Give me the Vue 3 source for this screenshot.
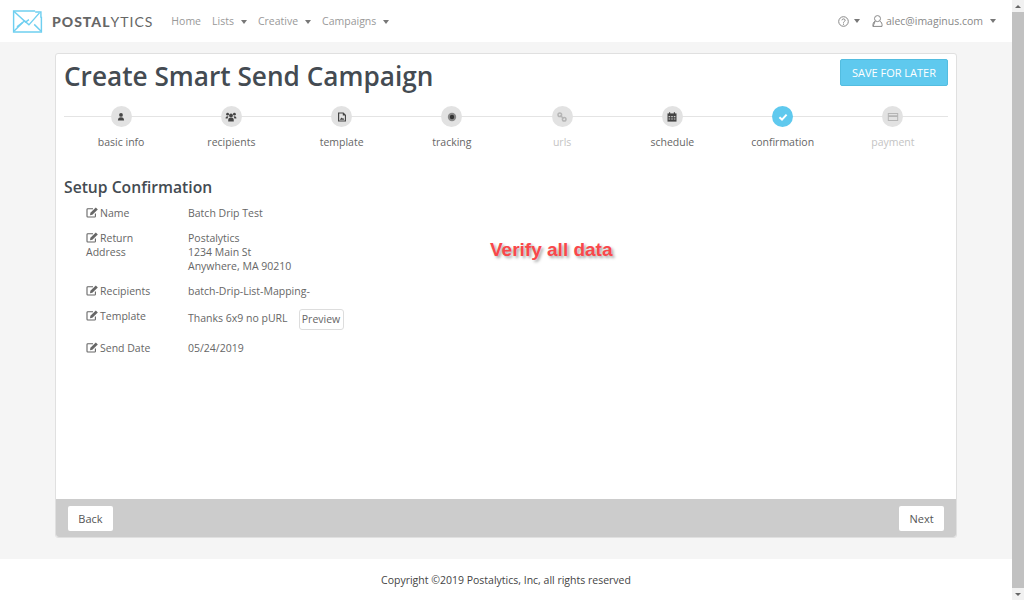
<script setup>
const navLinks = [
  { label: "Home", caret: false },
  { label: "Lists", caret: true },
  { label: "Creative", caret: true },
  { label: "Campaigns", caret: true },
];

const steps = [
  { label: "basic info", icon: "user" },
  { label: "recipients", icon: "users" },
  { label: "template", icon: "image" },
  { label: "tracking", icon: "target" },
  { label: "urls", icon: "link", muted: true },
  { label: "schedule", icon: "calendar" },
  { label: "confirmation", icon: "check", active: true },
  { label: "payment", icon: "card", muted: true },
];
</script>

<template>
  <div class="page">
    <div class="content">
      <header class="navbar">
        <svg class="logo" width="31" height="23" viewBox="0 0 32 24" fill="none" stroke="#6fcff0" stroke-width="1.5">
          <path d="M24 1H1.5V23H30.5V7" />
          <path d="M2 1.5L14 12.5L17.5 10" />
          <path d="M2 22L11 13M30 22L23 15" />
          <path d="M5 17.5L13 11.5L17.5 15.5L28.5 3" />
          <path d="M24 2H30V8" />
        </svg>
        <span class="brand"><b>POSTAL</b>YTICS</span>
        <nav class="nav-links">
          <a v-for="link in navLinks" :key="link.label" class="nav-link">
            {{ link.label }}<i v-if="link.caret" class="caret"></i>
          </a>
        </nav>
        <div class="nav-right">
          <svg width="11" height="11" viewBox="0 0 11 11" fill="none" stroke="#888" stroke-width="1">
            <circle cx="5.5" cy="5.5" r="4.8" />
            <path d="M3.9 4.3C3.9 2.4 7.2 2.5 7.2 4.3C7.2 5.4 5.5 5.4 5.5 6.7" />
            <path d="M5.5 7.6V8.8" />
          </svg>
          <i class="caret help-caret"></i>
          <svg class="user-icon" width="11" height="12" viewBox="0 0 11 12" fill="none" stroke="#888" stroke-width="1">
            <circle cx="5.5" cy="3.6" r="3" />
            <path d="M1 11.4H10C10.4 8.6 9.4 6.8 7.8 6.2M3.2 6.2C1.6 6.8 .6 8.6 1 11.4Z" />
          </svg>
          <span class="email">alec@imaginus.com</span>
          <i class="caret"></i>
        </div>
      </header>

      <main class="main">
        <section class="card">
          <div class="card-body">
            <div class="title-row">
              <h1>Create Smart Send Campaign</h1>
              <button class="save-btn">SAVE FOR LATER</button>
            </div>

            <ol class="steps">
              <li
                v-for="step in steps"
                :key="step.label"
                class="step"
                :class="{ muted: step.muted, active: step.active }"
              >
                <span class="dot">
                  <svg width="12" height="12" viewBox="0 0 12 12" class="step-icon">
                    <template v-if="step.icon === 'user'">
                      <circle cx="6" cy="3.9" r="1.9" />
                      <path d="M2.9 9.6C2.9 7.3 4 6.2 6 6.2S9.1 7.3 9.1 9.6Z" />
                    </template>
                    <template v-else-if="step.icon === 'users'">
                      <circle cx="6" cy="4.4" r="1.9" />
                      <circle cx="2.6" cy="3.2" r="1.4" />
                      <circle cx="9.4" cy="3.2" r="1.4" />
                      <path d="M3.2 10.4C3 7.6 4 6.6 6 6.6S9 7.6 8.8 10.4Z" />
                      <path d="M.6 7.6C.6 5.6 1.4 5 3.4 5.2L2.6 7.6ZM11.4 7.6C11.4 5.6 10.6 5 8.6 5.2L9.4 7.6Z" />
                    </template>
                    <template v-else-if="step.icon === 'image'">
                      <path d="M2 1.5H7.5L10 4V10.5H2Z" fill="#444" />
                      <path d="M3.2 2.6H6.8V4.6H8.9V9.4H3.2Z" fill="#e2e2e2" />
                      <path d="M3.8 8.8L5.4 6.6L6.4 7.6L7.2 7L8.3 8.8Z" fill="#444" />
                    </template>
                    <template v-else-if="step.icon === 'target'">
                      <circle cx="6" cy="6" r="4.2" fill="#888" />
                      <circle cx="6" cy="6" r="2.2" fill="#333" />
                    </template>
                    <template v-else-if="step.icon === 'link'">
                      <g fill="none" stroke="#b5b5b5" stroke-width="1.5">
                        <circle cx="3.8" cy="3.8" r="1.8" />
                        <circle cx="8.2" cy="8.2" r="1.8" />
                        <path d="M4.5 4.5L7.5 7.5" />
                      </g>
                    </template>
                    <template v-else-if="step.icon === 'calendar'">
                      <path d="M1.5 2.4H10.5V10.6H1.5Z" fill="#444" />
                      <path d="M3 1.2H4.2V3H3ZM7.8 1.2H9V3H7.8Z" fill="#444" />
                      <path d="M2.6 5H4.2V6.2H2.6ZM5.2 5H6.8V6.2H5.2ZM7.8 5H9.4V6.2H7.8ZM2.6 7.4H4.2V8.6H2.6ZM5.2 7.4H6.8V8.6H5.2ZM7.8 7.4H9.4V8.6H7.8Z" fill="#ccc" />
                    </template>
                    <template v-else-if="step.icon === 'check'">
                      <path d="M2.4 6.2L5 8.6L9.6 3.6" fill="none" stroke="#fff" stroke-width="2" />
                    </template>
                    <template v-else>
                      <path d="M.8 2H11.2V10H.8Z" fill="#b5b5b5" />
                      <path d="M1.8 3H10.2V4.2H1.8ZM1.8 6H10.2V9H1.8Z" fill="#e2e2e2" />
                    </template>
                  </svg>
                </span>
                <span class="step-label">{{ step.label }}</span>
              </li>
            </ol>

            <h2>Setup Confirmation</h2>

            <div class="details">
              <div class="row">
                <div class="key"><svg class="edit" width="13" height="11" viewBox="0 0 13 11"><use href="#edit-icon" /></svg>Name</div>
                <div class="val">Batch Drip Test</div>
              </div>
              <div class="row">
                <div class="key"><svg class="edit" width="13" height="11" viewBox="0 0 13 11"><use href="#edit-icon" /></svg>Return<br />Address</div>
                <div class="val">Postalytics<br />1234 Main St<br />Anywhere, MA 90210</div>
              </div>
              <div class="row">
                <div class="key"><svg class="edit" width="13" height="11" viewBox="0 0 13 11"><use href="#edit-icon" /></svg>Recipients</div>
                <div class="val">batch-Drip-List-Mapping-</div>
              </div>
              <div class="row row-template">
                <div class="key"><svg class="edit" width="13" height="11" viewBox="0 0 13 11"><use href="#edit-icon" /></svg>Template</div>
                <div class="val val-template">Thanks 6x9 no pURL<button class="preview">Preview</button></div>
              </div>
              <div class="row">
                <div class="key"><svg class="edit" width="13" height="11" viewBox="0 0 13 11"><use href="#edit-icon" /></svg>Send Date</div>
                <div class="val">05/24/2019</div>
              </div>
            </div>

            <p class="callout">Verify all data</p>
          </div>

          <div class="card-footer">
            <button class="pager-btn">Back</button>
            <button class="pager-btn">Next</button>
          </div>
        </section>
      </main>

      <footer class="site-footer">Copyright ©2019 Postalytics, Inc, all rights reserved</footer>
    </div>

    <div class="scrollbar">
      <span class="arrow up"></span>
      <span class="thumb"></span>
      <span class="arrow down"></span>
    </div>

    <svg width="0" height="0" class="defs">
      <symbol id="edit-icon" viewBox="0 0 13 11">
        <path d="M9.4 6.4V9.2C9.4 9.7 9 10 8.6 10H1.8C1.3 10 1 9.7 1 9.2V2.6C1 2.1 1.3 1.8 1.8 1.8H7" fill="none" stroke="#666" stroke-width="1.1" />
        <path d="M4.4 5.8L9.8 .6L11.8 2.4L6.4 7.8L4 8.2Z" fill="#666" />
      </symbol>
    </svg>
  </div>
</template>

<style scoped>
.page {
  display: flex;
  width: 1024px;
  height: 600px;
  overflow: hidden;
  font-family: "Open Sans", sans-serif;
  font-size: 10.5px;
  color: #555;
}

.content {
  flex: 1;
  display: flex;
  flex-direction: column;
  min-width: 0;
}

.defs {
  position: absolute;
}

/* navbar */
.navbar {
  height: 42px;
  display: flex;
  align-items: center;
  padding-left: 12px;
  padding-right: 16px;
  background: #fff;
  flex-shrink: 0;
}

.logo {
  margin-right: 9px;
}

.brand {
  font-family: "Lato", sans-serif;
  font-size: 14px;
  letter-spacing: 1px;
  color: #666;
  margin-right: 18px;
}

.brand b {
  font-weight: 900;
}

.nav-links {
  display: flex;
  gap: 11px;
}

.nav-link {
  color: #999;
  white-space: nowrap;
}

.caret {
  display: inline-block;
  width: 0;
  height: 0;
  margin-left: 7px;
  vertical-align: 1px;
  border-top: 4px solid #777;
  border-left: 3.5px solid transparent;
  border-right: 3.5px solid transparent;
}

.nav-right {
  margin-left: auto;
  display: flex;
  align-items: center;
  color: #888;
}

.help-caret {
  margin-right: 12px;
  margin-left: 5px;
  vertical-align: 0;
}

.user-icon {
  margin-right: 3px;
}

/* main */
.main {
  flex: 1;
  background: #f5f5f5;
  padding: 11px 55px 21px;
  display: flex;
  min-height: 0;
}

.card {
  flex: 1;
  display: flex;
  flex-direction: column;
  background: #fff;
  border: 1px solid #e0e0e0;
  border-radius: 3px;
  min-width: 0;
}

.card-body {
  position: relative;
  flex: 1;
  padding: 4px 8px 0;
}

.title-row {
  display: flex;
  justify-content: space-between;
  align-items: flex-start;
  height: 44px;
}

h1 {
  margin: 0;
  font-size: 26.2px;
  line-height: 36px;
  font-weight: 600;
  color: #444b52;
}

.save-btn {
  margin-top: 1px;
  width: 108px;
  height: 27px;
  padding: 0;
  font-family: inherit;
  font-size: 11px;
  color: #fff;
  background: #5fc9ee;
  border: 1px solid #53bde0;
  border-radius: 2px;
}

/* stepper */
.steps {
  position: relative;
  display: grid;
  grid-template-columns: repeat(8, 1fr);
  list-style: none;
  margin: 0;
  padding: 4px 0 0 2px;
}

.steps::before {
  content: "";
  position: absolute;
  left: 0;
  right: 0;
  top: 14px;
  height: 1px;
  background: #e4e4e4;
}

.step {
  position: relative;
  display: flex;
  flex-direction: column;
  align-items: center;
}

.dot {
  width: 21px;
  height: 21px;
  border-radius: 50%;
  background: #e2e2e2;
  display: flex;
  align-items: center;
  justify-content: center;
}

.step-icon {
  fill: #444;
}

.step-label {
  margin-top: 7px;
  line-height: 16px;
  white-space: nowrap;
  color: #666;
}

.step.muted .step-label {
  color: #c4c4c4;
}

.step.active .dot {
  background: #5fc9ee;
}

/* details */
h2 {
  margin: 27px 0 0;
  font-size: 15.7px;
  line-height: 21px;
  font-weight: 600;
  color: #444b52;
}

.details {
  margin-top: 8px;
  padding-left: 22px;
}

.row {
  display: grid;
  grid-template-columns: 102px 1fr;
  line-height: 14px;
  margin-bottom: 11px;
}

.key,
.val {
  color: #666;
}

.edit {
  margin-right: 1px;
  vertical-align: -1px;
}

.val-template {
  display: flex;
  align-items: center;
  height: 24px;
  margin-top: -3px;
}

.preview {
  margin-left: 11px;
  margin-top: 2px;
  width: 45px;
  height: 21px;
  padding: 0;
  font-family: inherit;
  font-size: 10.5px;
  color: #666;
  background: #fff;
  border: 1px solid #ddd;
  border-radius: 3px;
}

.callout {
  position: absolute;
  left: 434px;
  top: 186px;
  margin: 0;
  font-family: "Liberation Sans", sans-serif;
  font-size: 19px;
  font-weight: 700;
  line-height: 20px;
  color: #f9474a;
  text-shadow: 2px 2px 3px rgba(0, 0, 0, 0.35);
}

/* card footer */
.card-footer {
  height: 38px;
  flex-shrink: 0;
  background: #ccc;
  display: flex;
  align-items: center;
  justify-content: space-between;
  padding: 0 12px;
  border-radius: 0 0 3px 3px;
}

.pager-btn {
  width: 45px;
  height: 25px;
  padding: 0;
  font-family: inherit;
  font-size: 11px;
  color: #555;
  background: #fff;
  border: 0;
  border-radius: 2px;
}

.site-footer {
  height: 41px;
  flex-shrink: 0;
  background: #fff;
  display: flex;
  align-items: center;
  justify-content: center;
  color: #444;
}

/* fake scrollbar */
.scrollbar {
  width: 12px;
  flex-shrink: 0;
  display: flex;
  flex-direction: column;
  align-items: center;
  background: #f1f1f1;
}

.arrow {
  width: 12px;
  height: 12px;
  flex-shrink: 0;
  display: flex;
  align-items: center;
  justify-content: center;
}

.arrow::before {
  content: "";
  border-left: 3px solid transparent;
  border-right: 3px solid transparent;
}

.arrow.up::before {
  border-bottom: 3px solid #666;
}

.arrow.down::before {
  border-top: 3px solid #666;
}

.thumb {
  flex: 1;
  width: 100%;
  background: #c1c1c1;
}
</style>

<style>
html,
body {
  margin: 0;
  background: #fff;
}
</style>
